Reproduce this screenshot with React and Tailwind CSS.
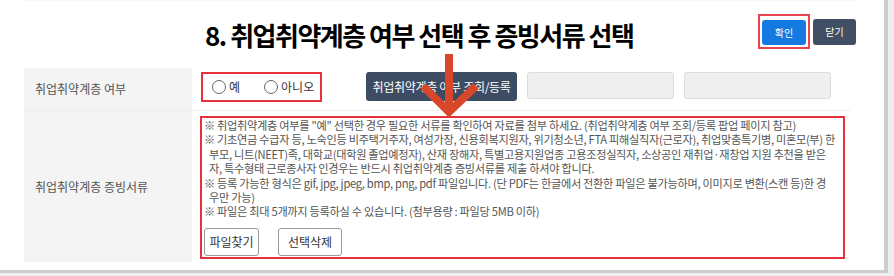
import React from "react";

const KR = { fontFamily: '"Noto Sans CJK KR", "Noto Sans", sans-serif' };

// 안내 문구 (줄바꿈은 원본 화면 기준)
const notes = [
  ['※ 취업취약계층 여부를 "예" 선택한 경우 필요한 서류를 확인하여 자료를 첨부 하세요. (취업취약계층 여부 조회/등록 팝업 페이지 참고)'],
  [
    '※ 기초연금 수급자 등, 노숙인등 비주택거주자, 여성가장, 신용회복지원자, 위기청소년, FTA 피해실직자(근로자), 취업맞춤특기병, 미혼모(부) 한',
    '부모, 니트(NEET)족, 대학교(대학원 졸업예정자), 산재 장해자, 특별고용지원업종 고용조정실직자, 소상공인 재취업·재창업 지원 추천을 받은',
    '자, 특수형태 근로종사자 인경우는 반드시 취업취약계층 증빙서류를 제출 하셔야 합니다.',
  ],
  [
    '※ 등록 가능한 형식은 gif, jpg, jpeg, bmp, png, pdf 파일입니다. (단 PDF는 한글에서 전환한 파일은 불가능하며, 이미지로 변환(스캔 등)한 경',
    '우만 가능)',
  ],
  ['※ 파일은 최대 5개까지 등록하실 수 있습니다. (첨부용량 : 파일당 5MB 이하)'],
];

function Radio({ label }) {
  return (
    <label className="flex items-center gap-[3px] text-[12px] text-[#333]">
      <span className="w-[14px] h-[14px] rounded-full border border-[#666] bg-white" />
      {label}
    </label>
  );
}

function Arrow() {
  return (
    <svg className="absolute left-[410px] top-[50px]" width="80" height="70" viewBox="410 50 80 70">
      <line x1="449" y1="54" x2="449" y2="108" stroke="#d9472b" strokeWidth="8" />
      <polyline points="423,86 449,112 476,86" fill="none" stroke="#d9472b" strokeWidth="8" strokeLinejoin="miter" />
    </svg>
  );
}

export default function App() {
  return (
    <div className="w-[894px] h-[276px] bg-[#eeeeee] relative" style={KR}>
      <div className="w-[888px] h-[273px] bg-white border-r-[4px] border-b-[3px] border-[#cdcdcd] pl-[24px]">
        {/* 상단 제목 + 버튼 */}
        <div className="h-[68px] w-[832px] flex items-start border-t border-[#f7f7f7]">
          <h1 className="ml-[181px] mt-[17px] text-[26px] font-bold text-black tracking-[-1.5px] leading-[34px]">
            8. 취업취약계층 여부 선택 후 증빙서류 선택
          </h1>
          <div className="ml-auto mt-[13px] flex items-center gap-[3px]">
            <div className="border-2 border-[#e8434e] p-[2px]">
              <button className="w-[44px] h-[25px] rounded-[3px] bg-[#1479e0] text-white text-[10px]">확인</button>
            </div>
            <button className="w-[43px] h-[26px] rounded-[3px] bg-[#414e63] text-white text-[10px]">닫기</button>
          </div>
        </div>

        {/* 취업취약계층 여부 */}
        <div className="w-[826px] flex h-[43px] border-b border-[#eeeeee]">
          <div className="w-[168px] bg-[#f4f4f4] flex items-center pl-[11px] text-[12px] text-[#555]">
            취업취약계층 여부
          </div>
          <div className="flex items-start pt-[4px] pl-[9px]">
            <div className="w-[121px] h-[30px] border-2 border-[#e8303a] flex items-center pl-[9px] gap-[24px]">
              <Radio label="예" />
              <Radio label="아니오" />
            </div>
            <button className="ml-[44px] w-[151px] h-[29px] rounded-[3px] bg-[#3e4c63] text-white text-[12px] tracking-[-0.3px]">
              취업취약계층 여부 조회/등록
            </button>
            <div className="ml-[10px] w-[147px] h-[27px] rounded-[3px] bg-[#efefef] border border-[#dcdcdc]" />
            <div className="ml-[10px] w-[147px] h-[27px] rounded-[3px] bg-[#efefef] border border-[#dcdcdc]" />
          </div>
        </div>

        {/* 증빙서류 */}
        <div className="w-[826px] flex h-[151px]">
          <div className="w-[168px] bg-[#f4f4f4] flex items-center pl-[11px] text-[12px] text-[#555]">
            취업취약계층 증빙서류
          </div>
          <div className="pt-[5px] pl-[8px]">
            <div className="w-[645px] h-[143px] border-2 border-[#e8303a] pl-[2px] flex flex-col">
              <div className="text-[11.2px] leading-[14.4px] text-[#555] tracking-[-0.3px]">
                {notes.map((lines, i) => (
                  <div key={i}>
                    {lines.map((l, j) => (
                      <div key={j} className={j > 0 ? "pl-[5px] whitespace-nowrap" : "whitespace-nowrap"}>
                        {l}
                      </div>
                    ))}
                  </div>
                ))}
              </div>
              <div className="mt-[9px] flex gap-[19px]">
                <button className="w-[55px] h-[28px] rounded-[3px] border border-[#999] bg-white text-[12px] text-[#333]">파일찾기</button>
                <button className="w-[64px] h-[28px] rounded-[3px] border border-[#999] bg-white text-[12px] text-[#333]">선택삭제</button>
              </div>
            </div>
          </div>
        </div>
      </div>
      <Arrow />
    </div>
  );
}
